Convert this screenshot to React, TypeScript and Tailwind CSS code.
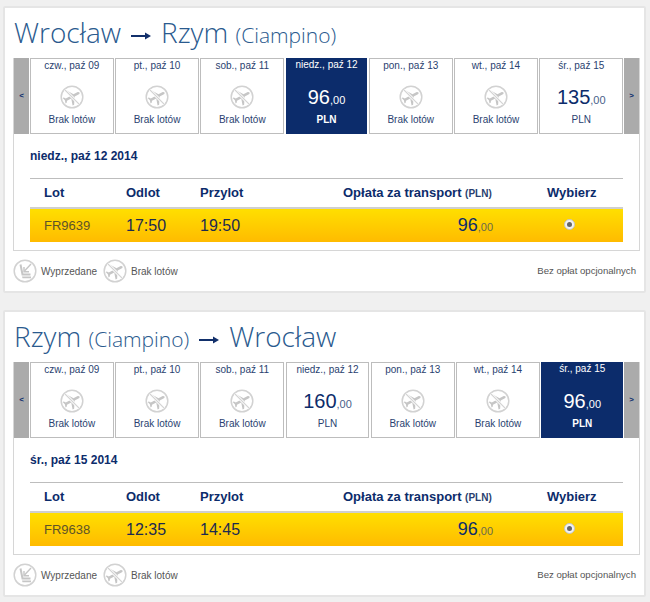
const sans = "font-['Liberation_Sans',Arial,sans-serif]";

type Day = { label: string; price?: string; selected?: boolean };

type Flight = {
  from: React.ReactNode;
  to: React.ReactNode;
  days: Day[];
  date: string;
  code: string;
  dep: string;
  arr: string;
};

function NoFlightIcon() {
  return (
    <svg width="24" height="24" viewBox="0 0 24 24" className="block">
      <circle cx="12" cy="12" r="10.8" fill="none" stroke="#d2d2d2" strokeWidth="1.5" />
      <path
        transform="rotate(62 12 12) translate(1.6 1.6) scale(0.87)"
        fill="#c6c6c6"
        d="M21 16v-2l-8-5V3.5c0-.83-.67-1.5-1.5-1.5S10 2.67 10 3.5V9l-8 5v2l8-2.5V19l-2 1.5V22l3.5-1 3.5 1v-1.5L13 19v-5.5l8 2.5z"
      />
      <line x1="4.8" y1="4.8" x2="19.2" y2="19.2" stroke="#fff" strokeWidth="2.8" />
      <line x1="4.4" y1="4.4" x2="19.6" y2="19.6" stroke="#d2d2d2" strokeWidth="1.2" />
    </svg>
  );
}

function SoldOutIcon() {
  return (
    <svg width="24" height="24" viewBox="0 0 24 24" className="block">
      <circle cx="12" cy="12" r="10.8" fill="none" stroke="#d2d2d2" strokeWidth="1.5" />
      <path d="M7.5 5.5 L9.5 15.5 L17.5 15.5" fill="none" stroke="#c6c6c6" strokeWidth="2" />
      <path d="M9 17.5 L18 17.5 L18 19.2 L9.5 19.2 Z" fill="#c6c6c6" />
      <path d="M18 5 L11.5 12" fill="none" stroke="#c6c6c6" strokeWidth="1.4" />
      <path d="M11 8 L11 12.8 L16 12.8" fill="none" stroke="#c6c6c6" strokeWidth="1.4" />
    </svg>
  );
}

function TitleArrow() {
  return (
    <svg width="20" height="8" viewBox="0 0 20 8" className="inline-block mx-[10px] align-[3px]">
      <rect x="0" y="3" width="17" height="2" fill="#12306b" />
      <path d="M14 0.5 L20 4 L14 7.5 Z" fill="#12306b" />
    </svg>
  );
}

function DayTab({ day }: { day: Day }) {
  if (day.selected) {
    return (
      <div className="flex-1 h-[76px] bg-[#0c2c6b] text-white flex flex-col items-center">
        <div className="text-[10px] leading-[14px] h-[27px] whitespace-nowrap">{day.label}</div>
        <div className="text-[20px] leading-[22px] h-[27px] pt-[1px]">
          {day.price}
          <span className="text-[11px]">,00</span>
        </div>
        <div className="text-[10px] leading-[12px] font-bold mt-[2px]">PLN</div>
      </div>
    );
  }
  return (
    <div className="flex-1 h-[76px] bg-white border border-[#bdbdbd] text-[#2a3f70] flex flex-col items-center">
      <div className="text-[10px] leading-[14px] h-[26px] whitespace-nowrap">{day.label}</div>
      {day.price ? (
        <>
          <div className="text-[20px] leading-[22px] h-[27px] pt-[1px] text-[#0c2c6b]">
            {day.price}
            <span className="text-[11px] text-[#4a5f8a]">,00</span>
          </div>
          <div className="text-[10px] leading-[12px] mt-[2px]">PLN</div>
        </>
      ) : (
        <>
          <NoFlightIcon />
          <div className="text-[10px] leading-[12px] mt-[5px]">Brak lotów</div>
        </>
      )}
    </div>
  );
}

function ArrowTab({ label }: { label: string }) {
  return (
    <div className="w-[15px] h-[76px] shrink-0 bg-[#ababab] text-[#0c2c6b] text-[8px] font-bold flex items-center justify-center">
      {label}
    </div>
  );
}

function FlightCard({ flight }: { flight: Flight }) {
  return (
    <section className="w-[643px] h-[287px] ml-[3px] bg-white border-2 border-[#e5e5e5] rounded-[2px] pl-[8px] pr-[4px]">
      <h1 className="h-[50px] pt-[7px] pl-[1px] whitespace-nowrap font-['Open_Sans',sans-serif] font-light text-[28px] leading-[34px] text-[#2a5a8e]">
        {flight.from}
        <TitleArrow />
        {flight.to}
      </h1>
      <div className={`${sans} w-[627px] h-[193px] border border-t-0 border-[#d6d6d6]`}>
        <div className="flex items-start">
          <ArrowTab label="<" />
          <div className="flex-1 flex gap-[1.6px] mx-[1px]">
            {flight.days.map((day) => (
              <DayTab key={day.label} day={day} />
            ))}
          </div>
          <ArrowTab label=">" />
        </div>
        <div className="pl-[16px] pr-[16px]">
          <div className="h-[44px] pt-[15px] text-[12px] leading-[14px] font-bold text-[#0c2c6b]">
            {flight.date}
          </div>
          <div className="flex items-center h-[29px] border-t border-[#bdbdbd] text-[13px] font-bold text-[#0c2c6b]">
            <div className="w-[96px] pl-[14px]">Lot</div>
            <div className="w-[74px]">Odlot</div>
            <div className="w-[143px]">Przylot</div>
            <div className="w-[151px] whitespace-nowrap">
              Opłata za transport <span className="text-[10px] text-[#2a3f70]">(PLN)</span>
            </div>
            <div className="pl-[53px]">Wybierz</div>
          </div>
          <div className="flex items-center h-[35px] border-t-2 border-[#cfcfcf] bg-gradient-to-b from-[#ffdf00] to-[#ffbb00]">
            <div className="w-[96px] pl-[14px] text-[13px] text-[#5e5328]">{flight.code}</div>
            <div className="w-[74px] text-[16px] text-[#1c2a50]">{flight.dep}</div>
            <div className="w-[143px] text-[16px] text-[#1c2a50]">{flight.arr}</div>
            <div className="w-[150px] text-right text-[#0c2c6b] text-[18px] leading-[22px]">
              96<span className="text-[11px] text-[#6a6a4a]">,00</span>
            </div>
            <div className="pl-[71px] pb-[2px]">
              <div className="w-[11px] h-[11px] rounded-full bg-[#f2f2f2] border border-[#c4c4c4] flex items-center justify-center">
                <div className="w-[5px] h-[5px] rounded-full bg-[#666]" />
              </div>
            </div>
          </div>
        </div>
      </div>
      <div className={`${sans} flex items-center h-[40px] pr-[4px] text-[10px] text-[#555]`}>
        <SoldOutIcon />
        <span className="ml-[4px] w-[62px]">Wyprzedane</span>
        <NoFlightIcon />
        <span className="ml-[4px]">Brak lotów</span>
        <span className="ml-auto text-[9.6px]">Bez opłat opcjonalnych</span>
      </div>
    </section>
  );
}

const labels = [
  "czw., paź 09",
  "pt., paź 10",
  "sob., paź 11",
  "niedz., paź 12",
  "pon., paź 13",
  "wt., paź 14",
  "śr., paź 15",
];

const outbound: Flight = {
  from: "Wrocław",
  to: (
    <>
      Rzym <span className="text-[21px]">(Ciampino)</span>
    </>
  ),
  days: labels.map((label, i) => ({
    label,
    price: i === 3 ? "96" : i === 6 ? "135" : undefined,
    selected: i === 3,
  })),
  date: "niedz., paź 12 2014",
  code: "FR9639",
  dep: "17:50",
  arr: "19:50",
};

const inbound: Flight = {
  from: (
    <>
      Rzym <span className="text-[21px]">(Ciampino)</span>
    </>
  ),
  to: "Wrocław",
  days: labels.map((label, i) => ({
    label,
    price: i === 3 ? "160" : i === 6 ? "96" : undefined,
    selected: i === 6,
  })),
  date: "śr., paź 15 2014",
  code: "FR9638",
  dep: "12:35",
  arr: "14:45",
};

export default function App() {
  return (
    <div className="w-[650px] h-[602px] overflow-hidden bg-[#f0f0f0] pt-[6px] flex flex-col gap-[17px]">
      <FlightCard flight={outbound} />
      <FlightCard flight={inbound} />
    </div>
  );
}
